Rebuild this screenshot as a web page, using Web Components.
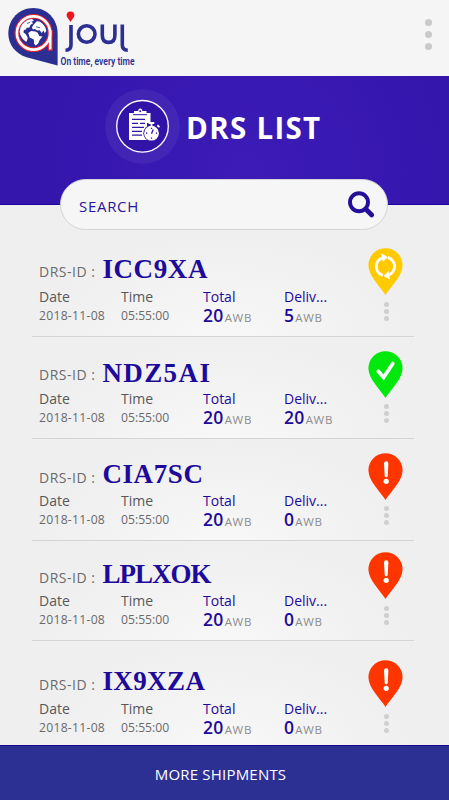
<!DOCTYPE html>
<html lang="en">
<head>
<meta charset="utf-8">
<meta name="viewport" content="width=device-width, initial-scale=1">
<title>DRS List</title>
<style>
  html, body {
    margin: 0;
    height: 100%;
  }
  body {
    font-family: "Open Sans", "Noto Sans", sans-serif;
    overflow: hidden;
  }
</style>
</head>
<body>
<drs-app></drs-app>
<script>
const shipments = [
  { id: 'ICC9XA', delivered: 5, status: 'progress', height: 104, gap: 5, bottom: 12, pinGap: 7, spacing: 0.6, shift: 1 },
  { id: 'NDZ5AI', delivered: 20, status: 'done', height: 102, gap: 4, bottom: 12, pinGap: 6, spacing: 1.4, shift: 2 },
  { id: 'CIA7SC', delivered: 0, status: 'failed', height: 102, gap: 3, bottom: 12, pinGap: 6, spacing: 0.6, shift: 0 },
  { id: 'LPLXOK', delivered: 0, status: 'failed', height: 100, gap: 3, bottom: 12, pinGap: 7, spacing: -1, shift: 0 },
  { id: 'IX9XZA', delivered: 0, status: 'failed', height: 104, gap: 4, bottom: 9, pinGap: 7, spacing: 0.4, shift: 0 },
];

class AppLogo extends HTMLElement {
  constructor() {
    super();
    this.attachShadow({ mode: 'open' });
  }
  connectedCallback() {
    this.shadowRoot.innerHTML = `
      <style>
        :host { display: block; width: 150px; height: 76px; }
        svg { display: block; overflow: visible; }
        text { font: 600 10px "Roboto", sans-serif; fill: #2b2f92; }
      </style>
      <svg width="150" height="76" viewBox="0 0 150 76">
        <path d="M57.600 65.500 26.500 57.200C15.500 53.800 8.300 44.500 8.300 33.500 8.300 19.100 19.300 8 33.200 8S57.600 19.100 57.600 33.500Z" fill="#2b2f92"/>
        <g fill="none" stroke="#e9232d" stroke-width="4.800">
          <circle cx="33.500" cy="33" r="16.600"/>
          <path d="M50.200 30v20.700"/>
        </g>
        <g fill="none" stroke="#fff" stroke-width="2.600">
          <circle cx="33.500" cy="33" r="16.600"/>
          <path d="M50.200 30v19.500"/>
        </g>
        <g fill="#fff">
          <path d="M20.500 27.500C22.500 22.500 27 19.200 32 19l2 1.500-2.500 1.200 1.700 1.500-2.600 1.600-1.200 2.700-2.500.3-1.600 2.200-1.300-.3-.6 2.600 2.600 2.200 1.800 3.600-1.300 3.700C23.500 40.500 20 36 19.600 32Z"/>
          <path d="M33.500 24.700l3.300-3.400 2.800.3c3.400 1.900 6 5.200 6.700 9.200l-1.500 2.500-1.400-2.800-1.700 2.500-2-2.800-2.500.2-2.200-1.500-2.100.5-1-1.800Z"/>
          <path d="M28.300 33.100l2.800-2.200 4.300.5 2.300 1.300 1.500 3.200 3.300.6-2.700 3.300-1.600 3.600-2.500 2.200-1.500-1.500-.4-4.600-4.100-1.900Z"/>
        </g>
        <path d="M27 23.500l3.300-1.400M36 26.800l4 .9" stroke="#2b2f92" stroke-width=".8"/>
        <path d="M70.500 22c-1.600-3-3.900-4.400-3.900-6.700a3.900 3.900 0 0 1 7.800 0c0 2.300-2.300 3.700-3.900 6.700Z" fill="#ee1420"/>
        <g fill="none" stroke="#2b2f92" stroke-width="3.600">
          <path d="M71 25v20q0 5-5.500 5.200"/>
          <circle cx="86.700" cy="34" r="8.300"/>
          <path d="M102.300 24.500v10.700q0 7.200 6.300 7.200t6.300-7.200V24.500"/>
          <path d="M122.300 24.500v20.500q0 5 5.500 5.200"/>
        </g>
        <text x="60.500" y="65" textLength="74" lengthAdjust="spacingAndGlyphs">On time, every time</text>
      </svg>
    `;
  }
}

class MoreDots extends HTMLElement {
  constructor() {
    super();
    this.attachShadow({ mode: 'open' });
  }
  connectedCallback() {
    this.shadowRoot.innerHTML = `
      <style>
        :host {
          display: flex;
          flex-direction: column;
          align-items: center;
          gap: var(--dot-gap, 2px);
        }
        i {
          width: var(--dot-size, 5px);
          height: var(--dot-size, 5px);
          border-radius: 50%;
          background: var(--dot-color, #cfcfcf);
        }
      </style>
      <i></i><i></i><i></i>
    `;
  }
}

class AppHeader extends HTMLElement {
  constructor() {
    super();
    this.attachShadow({ mode: 'open' });
  }
  connectedCallback() {
    this.shadowRoot.innerHTML = `
      <style>
        :host {
          display: flex;
          justify-content: space-between;
          box-sizing: border-box;
          height: 76px;
          padding-right: 17px;
          background: #f5f5f5;
        }
        more-dots {
          --dot-size: 7px;
          --dot-gap: 5px;
          --dot-color: #c9c9c9;
          margin-top: 19px;
        }
      </style>
      <app-logo></app-logo>
      <more-dots></more-dots>
    `;
  }
}

class PageHero extends HTMLElement {
  constructor() {
    super();
    this.attachShadow({ mode: 'open' });
  }
  connectedCallback() {
    this.shadowRoot.innerHTML = `
      <style>
        :host {
          display: flex;
          align-items: flex-start;
          box-sizing: border-box;
          height: 129px;
          padding: 13px 0 0 105px;
          background: radial-gradient(circle at 55% 75%, #3c1bb7, #3416ad 75%);
          border-bottom: 1px solid #1c00a0;
        }
        svg { flex: none; }
        h1 {
          margin: 16px 0 0 6px;
          font-size: 29.5px;
          line-height: 45px;
          font-weight: 700;
          letter-spacing: 1.3px;
          color: #fff;
          white-space: nowrap;
        }
      </style>
      <svg width="75" height="75" viewBox="0 0 75 75">
        <circle cx="37.500" cy="37.500" r="37.300" fill="#fff" fill-opacity=".06"/>
        <circle cx="37.500" cy="37.300" r="25.800" fill="#3114a7" stroke="#fff" stroke-width="1.300"/>
        <path d="M24 24h21.500v27H24Z" fill="#fff"/>
        <path d="M29 25v-3h4.200c0-3.300 4-3.300 4 0H41.500v3Z" fill="#fff"/>
        <path d="M28 25.700h14" stroke="#3114a7" stroke-width="1"/>
        <circle cx="35.200" cy="22.200" r="1" fill="#3114a7"/>
        <path d="M27 30.300h13M27 34.400h6M35 34.400h5M27 38.300h12M27 42.300h10M27 46.200h10" stroke="#3114a7" stroke-width="1.200"/>
        <circle cx="46.500" cy="44.200" r="8.200" fill="#3114a7"/>
        <path d="M42 34h9v3.500h-9Z" fill="#3114a7"/>
        <circle cx="46.500" cy="44.200" r="7.400" fill="#fff"/>
        <path d="M43.500 34h5.800M46.500 34v4M52.300 36.300l2.200 1.800" stroke="#fff" stroke-width="1.800"/>
        <path d="M46.500 44.800l1.700-4.300M46.500 38.800v1.200M46.500 48.500v1.300M41 44.200h1.300M50.800 44.200h1.300" stroke="#3114a7" stroke-width="1.300"/>
      </svg>
      <h1><slot></slot></h1>
    `;
  }
}

class SearchBar extends HTMLElement {
  constructor() {
    super();
    this.attachShadow({ mode: 'open' });
  }
  connectedCallback() {
    this.shadowRoot.innerHTML = `
      <style>
        :host {
          display: flex;
          align-items: center;
          justify-content: space-between;
          box-sizing: border-box;
          position: relative;
          width: 328px;
          height: 51px;
          margin: -26px 0 0 60px;
          padding: 0 12px 0 18px;
          border: 1px solid #d4d4d6;
          border-radius: 26px;
          background: #f6f6f6;
          color: #2b1698;
          font-size: 15px;
          letter-spacing: 0.7px;
        }
        span { padding-top: 2px; }
      </style>
      <span><slot></slot></span>
      <svg width="28" height="28" viewBox="0 0 28 28" fill="none" stroke="#230f98" stroke-linecap="round">
        <circle cx="12" cy="11.300" r="9" stroke-width="3.900"/>
        <path d="M18.700 18l6 6" stroke-width="4.700"/>
      </svg>
    `;
  }
}

class StatusPin extends HTMLElement {
  constructor() {
    super();
    this.attachShadow({ mode: 'open' });
  }
  connectedCallback() {
    const colors = { progress: '#ffca00', done: '#00e80c', failed: '#ff3500' };
    const marks = {
      progress: `
        <g fill="none" stroke="#fff" stroke-width="2.900">
          <path d="M14.800 27.300A9.200 9.200 0 0 1 15.600 9.500"/>
          <path d="M19.800 9.500A9.200 9.200 0 0 1 19.500 27.300"/>
        </g>
        <path d="M13 5.300l6.700 3.600-4.800 5ZM21.900 31.400l-6.300-3.400 5-5Z" fill="#fff"/>`,
      done: '<path d="M10.300 20.300l5.300 6.200 9.200-14" fill="none" stroke="#fff" stroke-width="3.700" stroke-linecap="round"/>',
      failed: '<path d="M16 10.500a2.200 2.200 0 0 1 4.400 0l-.7 12.300a1.500 1.500 0 0 1-3 0Z" fill="#fff"/><circle cx="18.200" cy="28.300" r="2.600" fill="#fff"/>',
    };
    const status = this.getAttribute('status');
    this.shadowRoot.innerHTML = `
      <style>
        :host { display: block; height: 47px; }
        svg { display: block; }
      </style>
      <svg width="36" height="47" viewBox="0 0 36 47">
        <path d="M17.500 47C12.500 39 .4 28 .4 17.300a17.100 17.100 0 0 1 34.200 0C34.600 28 22.500 39 17.500 47Z" fill="${colors[status]}"/>
        ${marks[status]}
      </svg>
    `;
  }
}

class ShipmentRow extends HTMLElement {
  constructor() {
    super();
    this.attachShadow({ mode: 'open' });
  }
  set shipment(shipment) {
    this._shipment = shipment;
    this.render();
  }
  render() {
    const s = this._shipment;
    this.shadowRoot.innerHTML = `
      <style>
        :host {
          display: flex;
          justify-content: space-between;
          box-sizing: border-box;
          height: ${s.height}px;
          margin: 0 35px 0 32px;
          padding: 0 10px 0 7px;
          border-bottom: 1px solid #d5d5d7;
          color: #58585a;
        }
        :host(:last-of-type) { border-bottom: 0; }
        .info {
          display: flex;
          flex-direction: column;
          justify-content: flex-end;
          padding-bottom: ${s.bottom}px;
        }
        .title {
          display: flex;
          align-items: baseline;
          height: 28px;
          margin-bottom: ${s.gap}px;
          line-height: 28px;
          font-size: 14px;
          letter-spacing: 0.5px;
          white-space: nowrap;
        }
        .title span { color: #6a6a6c; }
        .title b {
          position: relative;
          top: ${s.shift}px;
          margin-left: 7px;
          font: 700 27px/28px "Liberation Serif", serif;
          letter-spacing: ${s.spacing}px;
          color: #1e0a9a;
        }
        .grid {
          display: grid;
          grid-template-columns: 82px 82px 81px 60px;
        }
        .name { font-size: 14px; line-height: 20px; }
        .value {
          height: 17px;
          font-size: 12.200px;
          line-height: 17px;
          color: #6a6a6c;
          white-space: nowrap;
        }
        .date { letter-spacing: 0.250px; }
        .blue .name { color: #1e0a9a; }
        .blue strong {
          font-size: 17.500px;
          line-height: 17px;
          font-weight: 600;
          letter-spacing: 0.300px;
          color: #1e0a9a;
        }
        .blue small {
          margin-left: 1px;
          font-size: 11.500px;
          font-weight: 500;
          letter-spacing: 0.700px;
          color: #8c8c8e;
        }
        .side {
          display: flex;
          flex-direction: column;
          justify-content: flex-end;
          padding-bottom: ${s.bottom + 3}px;
        }
        status-pin { margin-bottom: ${s.pinGap}px; }
      </style>
      <div class="info">
        <div class="title"><span>DRS-ID :</span><b>${s.id}</b></div>
        <div class="grid">
          <div><div class="name">Date</div><div class="value date">2018-11-08</div></div>
          <div><div class="name">Time</div><div class="value">05:55:00</div></div>
          <div class="blue"><div class="name">Total</div><div class="value"><strong>20</strong><small>AWB</small></div></div>
          <div class="blue"><div class="name">Deliv...</div><div class="value"><strong>${s.delivered}</strong><small>AWB</small></div></div>
        </div>
      </div>
      <div class="side">
        <status-pin status="${s.status}"></status-pin>
        <more-dots></more-dots>
      </div>
    `;
  }
}

class MoreButton extends HTMLElement {
  constructor() {
    super();
    this.attachShadow({ mode: 'open' });
  }
  connectedCallback() {
    this.shadowRoot.innerHTML = `
      <style>
        :host {
          display: flex;
          align-items: center;
          justify-content: center;
          box-sizing: border-box;
          height: 55px;
          padding: 1px 8px 0 0;
          border-top: 1px solid #140886;
          background: #2d3093;
          color: #fff;
          font-size: 15px;
          letter-spacing: 0.2px;
        }
      </style>
      <slot></slot>
    `;
  }
}

class DrsApp extends HTMLElement {
  constructor() {
    super();
    this.attachShadow({ mode: 'open' });
  }
  connectedCallback() {
    this.shadowRoot.innerHTML = `
      <style>
        :host {
          display: flex;
          flex-direction: column;
          width: 449px;
          height: 800px;
          background: #efefef;
        }
        .list { flex: 1; padding-top: 3px; }
        shipment-row {
          background: radial-gradient(ellipse at 50% 110%, #f8f8f8, #efefef 70%);
        }
      </style>
      <app-header></app-header>
      <page-hero>DRS LIST</page-hero>
      <search-bar>SEARCH</search-bar>
      <div class="list"></div>
      <more-button>MORE SHIPMENTS</more-button>
    `;
    const list = this.shadowRoot.querySelector('.list');
    shipments.forEach((shipment) => {
      const row = document.createElement('shipment-row');
      row.shipment = shipment;
      list.appendChild(row);
    });
  }
}

customElements.define('app-logo', AppLogo);
customElements.define('more-dots', MoreDots);
customElements.define('app-header', AppHeader);
customElements.define('page-hero', PageHero);
customElements.define('search-bar', SearchBar);
customElements.define('status-pin', StatusPin);
customElements.define('shipment-row', ShipmentRow);
customElements.define('more-button', MoreButton);
customElements.define('drs-app', DrsApp);
</script>
</body>
</html>
